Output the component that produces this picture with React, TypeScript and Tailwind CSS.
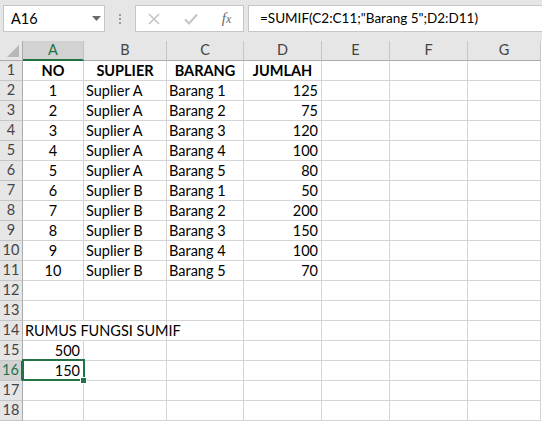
import React from "react";

const FONT = { fontFamily: "Lato, 'Open Sans', sans-serif" };

const cols = ["A", "B", "C", "D", "E", "F", "G"];

type Cell = { t?: string; align?: "l" | "c" | "r"; bold?: boolean; noRight?: boolean };

const data: Record<number, Record<string, Cell>> = {
  1: {
    A: { t: "NO", align: "c", bold: true },
    B: { t: "SUPLIER", align: "c", bold: true },
    C: { t: "BARANG", align: "c", bold: true },
    D: { t: "JUMLAH", align: "c", bold: true },
  },
  14: { A: { t: "RUMUS FUNGSI SUMIF", align: "l", noRight: true } },
  15: { A: { t: "500", align: "r" } },
  16: { A: { t: "150", align: "r" } },
};

const qty = [125, 75, 120, 100, 80, 50, 200, 150, 100, 70];
for (let i = 0; i < 10; i++) {
  data[i + 2] = {
    A: { t: String(i + 1), align: "c" },
    B: { t: i < 5 ? "Suplier A" : "Suplier B", align: "l" },
    C: { t: "Barang " + ((i % 5) + 1), align: "l" },
    D: { t: String(qty[i]), align: "r" },
  };
}

function Toolbar() {
  return (
    <div className="h-[41px] bg-[#e6e6e6] flex items-start pt-[5px]">
      <div className="ml-[3px] w-[102px] h-[27px] bg-white border border-[#c6c6c6] flex items-center relative">
        <span className="pl-[7px] text-[14.5px] text-black" style={FONT}>A16</span>
        <svg className="absolute left-[88px] top-[10px]" width="9" height="5" viewBox="0 0 9 5">
          <path d="M0 0 L9 0 L4.5 5 Z" fill="#6b6b6b" />
        </svg>
      </div>
      <div className="w-[30px] h-[27px] flex flex-col items-center justify-center gap-[2px]">
        <div className="w-[2px] h-[2px] bg-[#9a9a9a]" />
        <div className="w-[2px] h-[2px] bg-[#9a9a9a]" />
        <div className="w-[2px] h-[2px] bg-[#9a9a9a]" />
      </div>
      <div className="w-[109px] h-[27px] bg-white border border-[#c6c6c6] flex items-center">
        <div className="w-[36px] flex justify-center">
          <svg width="12" height="12" viewBox="0 0 12 12">
            <path d="M1 1 L11 11 M11 1 L1 11" stroke="#c4c4c4" strokeWidth="1.6" />
          </svg>
        </div>
        <div className="w-[38px] flex justify-center">
          <svg width="14" height="12" viewBox="0 0 14 12">
            <path d="M1 6.5 L5 10.5 L13 1.5" stroke="#c4c4c4" strokeWidth="2" fill="none" />
          </svg>
        </div>
        <div className="w-[33px] flex justify-center">
          <span className="text-[15px] italic text-[#6a6a6a] leading-none" style={{ fontFamily: "'Liberation Serif', serif" }}>
            f<span className="text-[12px]">x</span>
          </span>
        </div>
      </div>
      <div className="ml-[4px] flex-1 h-[27px] bg-white border border-r-0 border-[#c6c6c6] flex items-center">
        <span className="pl-[11px] text-[13.5px] text-black whitespace-nowrap" style={FONT}>
          =SUMIF(C2:C11;"Barang 5";D2:D11)
        </span>
      </div>
    </div>
  );
}

export default function App() {
  const rows = Array.from({ length: 18 }, (_, i) => i + 1);
  return (
    <div className="w-[542px] h-[422px] overflow-hidden bg-white" style={FONT}>
      <Toolbar />
      <div className="grid grid-cols-[23px_61px_83px_77px_78px_68px_78px_73px] text-[14.5px]">
        <div className="h-[20px] bg-[#e6e6e6] border-r border-b border-[#ababab] relative">
          <svg className="absolute right-[3px] bottom-[3px]" width="12" height="12" viewBox="0 0 12 12">
            <path d="M12 0 L12 12 L0 12 Z" fill="#b7b7b7" />
          </svg>
        </div>
        {cols.map((c) =>
          c === "A" ? (
            <div key={c} className="h-[20px] bg-[#d2d2d2] border-r border-[#c0c0c0] border-b-2 border-b-[#217346] flex items-center justify-center text-[#217346] leading-none">
              {c}
            </div>
          ) : (
            <div key={c} className="h-[20px] bg-[#e6e6e6] border-r border-[#c6c6c6] border-b border-b-[#ababab] flex items-center justify-center text-[#444] leading-none">
              {c}
            </div>
          )
        )}
        {rows.map((r) => (
          <React.Fragment key={r}>
            {r === 16 ? (
              <div className="h-[20px] bg-[#d2d2d2] border-b border-[#c6c6c6] border-r-2 border-r-[#217346] flex items-center justify-center text-[#217346] leading-none">
                {r}
              </div>
            ) : (
              <div className="h-[20px] bg-[#e6e6e6] border-b border-[#c6c6c6] border-r border-r-[#ababab] flex items-center justify-center text-[#444] leading-none">
                {r}
              </div>
            )}
            {cols.map((c) => {
              const cell = data[r]?.[c];
              const sel = r === 16 && c === "A";
              const al = cell?.align === "c" ? "justify-center" : cell?.align === "r" ? "justify-end pr-[3px]" : "justify-start pl-[2px]";
              return (
                <div
                  key={c}
                  className={
                    "h-[20px] border-b border-[#d4d4d4] flex items-end pb-[1px] leading-[17px] whitespace-nowrap relative text-black " +
                    (cell?.noRight ? "border-r border-r-white overflow-visible z-10 " : sel ? "border-r overflow-visible z-10 " : "border-r overflow-hidden ") +
                    al +
                    (cell?.bold ? " font-bold" : "")
                  }
                >
                  {cell?.t}
                  {sel && (
                    <>
                      <div className="absolute left-[-1px] top-[-2px] w-[63px] h-[22px] border-2 border-[#217346] z-20" />
                      <div className="absolute left-[57px] top-[16px] w-[7px] h-[7px] bg-[#217346] border border-white z-30" />
                    </>
                  )}
                </div>
              );
            })}
          </React.Fragment>
        ))}
      </div>
    </div>
  );
}
